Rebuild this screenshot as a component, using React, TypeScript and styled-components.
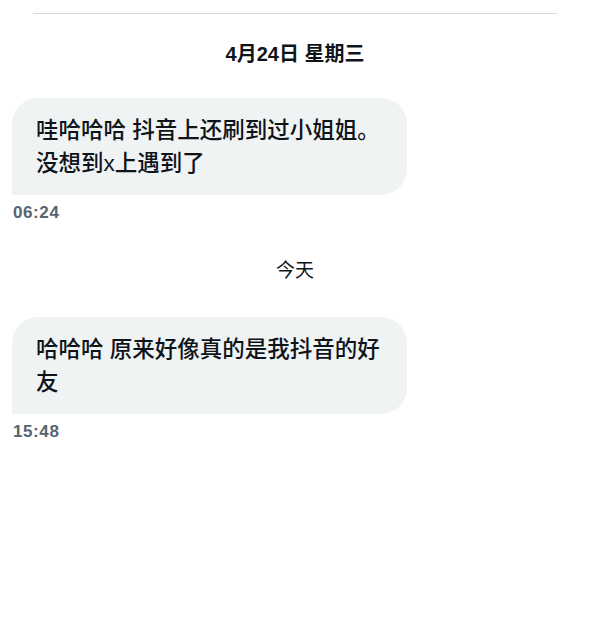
import React from "react";
import styled, { createGlobalStyle } from "styled-components";

const GlobalStyle = createGlobalStyle`
  html, body {
    margin: 0;
    padding: 0;
    background: #ffffff;
  }
  body {
    font-family: "Liberation Sans", "Noto Sans CJK SC", sans-serif;
    color: #0f1419;
  }
`;

type Message = { text: string; time: string };
type Day = { label: string; bold?: boolean; padTop: number; padBottom: number; messages: Message[] };

const days: Day[] = [
  {
    label: "4月24日 星期三",
    bold: true,
    padTop: 28,
    padBottom: 32,
    messages: [{ text: "哇哈哈哈 抖音上还刷到过小姐姐。没想到x上遇到了", time: "06:24" }],
  },
  {
    label: "今天",
    padTop: 36,
    padBottom: 34,
    messages: [{ text: "哈哈哈 原来好像真的是我抖音的好友", time: "15:48" }],
  },
];

export default function App() {
  return (
    <>
      <GlobalStyle />
      <Thread>
        <Divider />
        {days.map((day) => (
          <DayGroup key={day.label}>
            <DayLabel $bold={day.bold} $padTop={day.padTop} $padBottom={day.padBottom}>
              {day.label}
            </DayLabel>
            {day.messages.map((m) => (
              <MessageRow key={m.time}>
                <Bubble>{m.text}</Bubble>
                <Time>{m.time}</Time>
              </MessageRow>
            ))}
          </DayGroup>
        ))}
      </Thread>
    </>
  );
}

// Styled Components
const Thread = styled.main`
  width: 590px;
  min-height: 644px;
  padding-top: 13px;
  box-sizing: border-box;
  display: flex;
  flex-direction: column;
`;

const Divider = styled.hr`
  margin: 0 33px;
  border: none;
  height: 1px;
  background: #d3d9dd;
`;

const DayGroup = styled.section`
  display: flex;
  flex-direction: column;
`;

const DayLabel = styled.div<{ $bold?: boolean; $padTop: number; $padBottom: number }>`
  text-align: center;
  padding: ${(p) => p.$padTop}px 0 ${(p) => p.$padBottom}px;
  font-size: ${(p) => (p.$bold ? "20px" : "19px")};
  font-weight: ${(p) => (p.$bold ? 700 : 400)};
  line-height: 24px;
  color: #0f1419;
`;

const MessageRow = styled.div`
  display: flex;
  flex-direction: column;
  align-items: flex-start;
  padding-left: 12px;
`;

const Bubble = styled.div`
  max-width: 395px;
  box-sizing: border-box;
  padding: 16px 20px 15px 24px;
  background: #eff3f4;
  border-radius: 26px 26px 26px 0;
  font-family: "Liberation Sans", "Noto Sans CJK SC", sans-serif;
  font-size: 22.5px;
  font-weight: 500;
  line-height: 33px;
  color: #0f1419;
`;

const Time = styled.div`
  margin-top: 8px;
  padding-left: 1px;
  font-size: 17px;
  font-weight: 700;
  letter-spacing: 0.6px;
  line-height: 20px;
  color: #58646e;
`;
